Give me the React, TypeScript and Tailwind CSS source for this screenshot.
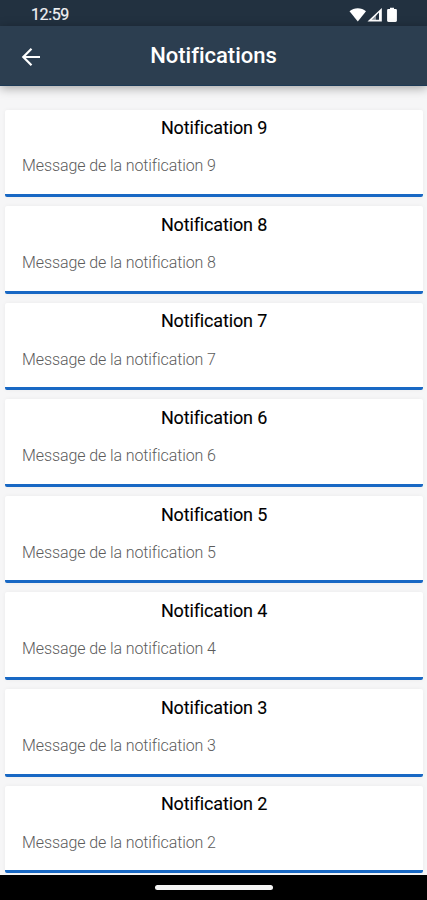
const notifications = [9, 8, 7, 6, 5, 4, 3, 2];

function StatusBar() {
  return (
    <div className="flex h-[26px] shrink-0 items-center justify-between bg-[#223140] pr-[29px] pl-[31px]">
      <span className="mt-[4px] text-[16px] leading-none tracking-[-0.4px] text-[#f1f2f4] [-webkit-text-stroke:0.2px_#f1f2f4]">
        12:59
      </span>
      <svg width="49" height="16" viewBox="0 0 49 16" className="mt-[3px]" fill="#ffffff">
        {/* wifi */}
        <path d="M0.5 4.2C5 0.2 12.5 0.2 17 4.2L8.8 14.5Z" />
        {/* cell signal */}
        <path d="M32.8 1V14.5H18.5Z" />
        <path d="M30 5.6V12.8H27V8.4Z" fill="#223140" />
        <path d="M27 8.4V12.8H22.6Z" fill="#8b949d" />
        {/* battery */}
        <path d="M41 0.8h4v1.3h1.5c.8 0 1.4.5 1.4 1.2v10.4c0 .7-.6 1.2-1.4 1.2h-7c-.8 0-1.4-.5-1.4-1.2v-10.4c0-.7.6-1.2 1.4-1.2H41Z" />
      </svg>
    </div>
  );
}

function Header() {
  return (
    <header className="grid h-[60px] shrink-0 grid-cols-[62px_1fr_62px] items-center border-b border-[#1d3a56] bg-[#2c3e50] shadow-[0_2px_10px_rgba(0,0,0,0.35)]">
      <button className="pt-[2px] pl-[21px]" aria-label="Retour">
        <svg width="20" height="20" viewBox="0 0 20 20" fill="none" stroke="#ffffff" strokeWidth="2.2">
          <path d="M10.5 1.8L2.3 10L10.5 18.2M2.3 10H19" />
        </svg>
      </button>
      <h1 className="text-center text-[22px] leading-none font-medium text-white">Notifications</h1>
    </header>
  );
}

function NotificationCard({ id }: { id: number }) {
  return (
    <div className="h-[87.6px] shrink-0 rounded-[2px] border-b-3 border-[#1868c4] bg-white shadow-[0_0_4px_rgba(0,0,0,0.05)]">
      <h2 className="pt-[6.7px] text-center text-[18px] leading-6 tracking-[-0.15px] text-black [-webkit-text-stroke:0.1px_#000]">
        Notification {id}
      </h2>
      <p className="pt-[14.2px] pl-[17px] text-[16px] leading-6 font-light tracking-[-0.1px] text-[#5c5c5c]">
        Message de la notification {id}
      </p>
    </div>
  );
}

export default function App() {
  return (
    <div className="flex h-[900px] w-full flex-col overflow-hidden bg-[#f6f6f7] font-['Roboto',sans-serif] [font-variant-ligatures:none]">
      <div className="z-10 flex flex-col">
        <StatusBar />
        <Header />
      </div>
      <main className="flex min-h-0 flex-1 flex-col gap-[9px] overflow-hidden pt-[23.5px] pr-1 pl-[5px]">
        {notifications.map((id) => (
          <NotificationCard key={id} id={id} />
        ))}
      </main>
      <div className="flex h-[25px] shrink-0 justify-center bg-black pt-[10px]">
        <div className="h-[5px] w-[118px] rounded-full bg-[#f5f5f5]" />
      </div>
    </div>
  );
}
